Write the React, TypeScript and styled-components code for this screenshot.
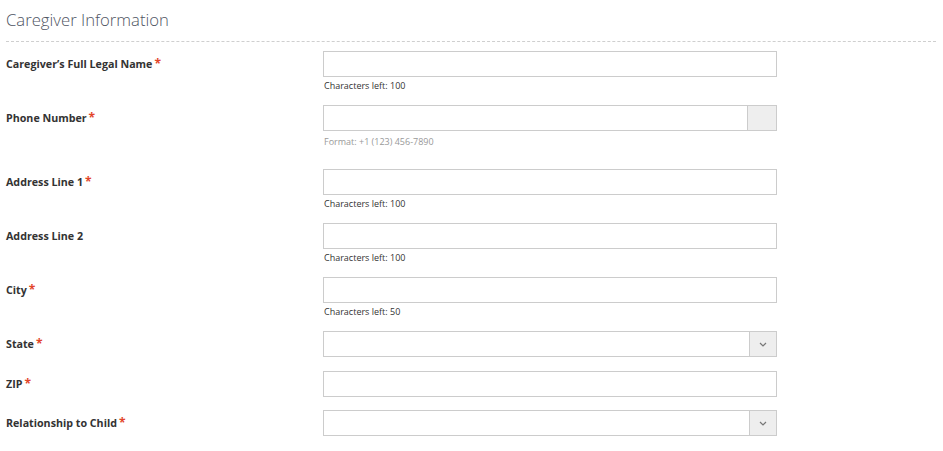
import React from "react";
import styled, { createGlobalStyle } from "styled-components";

const GlobalStyle = createGlobalStyle`
  body {
    margin: 0;
    background: #fff;
    font-family: "Open Sans", "Noto Sans", Arial, sans-serif;
    color: #333;
  }
`;

const Page = styled.div`
  padding: 0 7px 0 6px;
`;

const Heading = styled.h2`
  margin: 0;
  padding-top: 7px;
  height: 42px;
  box-sizing: border-box;
  font-size: 16.7px;
  font-weight: 300;
  line-height: 26px;
  color: #4f5563;
  border-bottom: 1px dashed #cfcfcf;
`;

const Form = styled.div`
  padding-top: 9px;
`;

const Row = styled.div<{ $gap: number }>`
  display: grid;
  grid-template-columns: 317px 454px;
  align-items: start;
  margin-bottom: ${(p) => p.$gap}px;
`;

const Label = styled.label`
  height: 26px;
  box-sizing: border-box;
  padding-top: 1px;
  font-size: 10.7px;
  font-weight: 700;
  color: #333;
  line-height: 25px;
`;

const Star = styled.span`
  color: #e2452a;
  font-size: 12px;
  line-height: 1;
  margin-left: 2px;
`;

const Field = styled.div`
  display: flex;
  flex-direction: column;
`;

const Box = styled.div`
  display: flex;
  height: 26px;
  box-sizing: border-box;
  border: 1px solid #cccccc;
  background: #fff;
`;

const Input = styled.input`
  flex: 1;
  min-width: 0;
  border: none;
  outline: none;
  padding: 0 6px;
  font: inherit;
  font-size: 12px;
`;

const Addon = styled.div<{ $w: number }>`
  width: ${(p) => p.$w}px;
  border-left: 1px solid #cccccc;
  background: #eeeeee;
  display: flex;
  align-items: center;
  justify-content: center;
`;

const Hint = styled.div<{ $muted?: boolean; $top: number }>`
  margin-top: ${(p) => p.$top}px;
  padding-left: 1px;
  font-size: 9px;
  line-height: 12px;
  color: ${(p) => (p.$muted ? "#999" : "#333")};
`;

const Chevron = () => (
  <svg width="8" height="5" viewBox="0 0 8 5">
    <path d="M1 1l3 3 3-3" fill="none" stroke="#777" strokeWidth="1.2" />
  </svg>
);

type FieldDef = {
  label: string;
  required: boolean;
  kind: "text" | "phone" | "select";
  hint?: string;
};

const fields: FieldDef[] = [
  { label: "Caregiver\u2019s Full Legal Name", required: true, kind: "text", hint: "Characters left: 100" },
  { label: "Phone Number", required: true, kind: "phone", hint: "Format: +1 (123) 456-7890" },
  { label: "Address Line 1", required: true, kind: "text", hint: "Characters left: 100" },
  { label: "Address Line 2", required: false, kind: "text", hint: "Characters left: 100" },
  { label: "City", required: true, kind: "text", hint: "Characters left: 50" },
  { label: "State", required: true, kind: "select" },
  { label: "ZIP", required: true, kind: "text" },
  { label: "Relationship to Child", required: true, kind: "select" },
];

const App = () => {
  return (
    <Page>
      <GlobalStyle />
      <Heading>Caregiver Information</Heading>
      <Form>
        {fields.map((f, i) => {
          const phone = f.kind === "phone";
          let gap = 13;
          if (phone) gap = 21;
          else if (!f.hint) gap = f.label === "State" ? 14 : 13;
          return (
            <Row key={i} $gap={gap}>
              <Label>
                {f.label}
                {f.required && <Star>*</Star>}
              </Label>
              <Field>
                <Box>
                  <Input />
                  {phone && <Addon $w={28} />}
                  {f.kind === "select" && (
                    <Addon $w={26}>
                      <Chevron />
                    </Addon>
                  )}
                </Box>
                {f.hint && (
                  <Hint $muted={phone} $top={phone ? 5 : 3}>
                    {f.hint}
                  </Hint>
                )}
              </Field>
            </Row>
          );
        })}
      </Form>
    </Page>
  );
};

export default App;
